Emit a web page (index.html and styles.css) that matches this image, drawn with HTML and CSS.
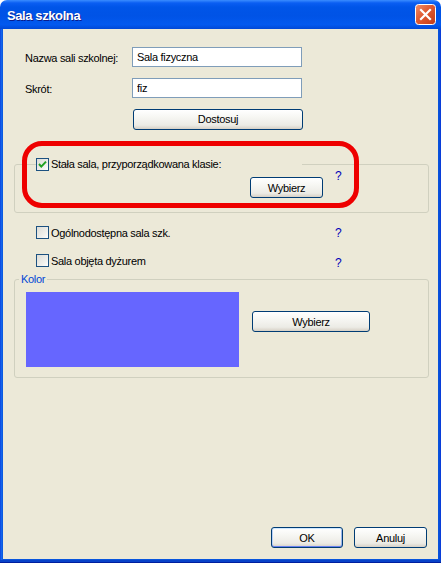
FILE: index.html
```html
<!DOCTYPE html>
<html lang="pl">
<head>
  <meta charset="UTF-8" />
  <title>Sala szkolna</title>
  <link rel="stylesheet" href="styles.css">
</head>
<body>
  <div class="window">
    <div class="titlebar">
      <span class="title">Sala szkolna</span>
      <button class="close" aria-label="Zamknij">
        <svg width="21" height="21" viewBox="0 0 21 21">
          <defs>
            <linearGradient id="closeFill" x1="0" y1="0" x2="1" y2="1">
              <stop offset="0" stop-color="#f0906c" />
              <stop offset="0.45" stop-color="#e05a32" />
              <stop offset="1" stop-color="#c23b16" />
            </linearGradient>
          </defs>
          <rect x="0.5" y="0.5" width="20" height="20" rx="3" fill="url(#closeFill)" stroke="#ffffff" />
          <path d="M6 6 L15 15 M15 6 L6 15" stroke="#ffffff" stroke-width="2.2" stroke-linecap="square" />
        </svg>
      </button>
    </div>

    <div class="frame">
      <div class="content">
        <div class="form">
          <label class="field-label" for="name">Nazwa sali szkolnej:</label>
          <input class="field" id="name" type="text" value="Sala fizyczna" />
          <label class="field-label" for="short">Skrót:</label>
          <input class="field" id="short" type="text" value="fiz" />
          <span></span>
          <button class="btn btn-adjust">Dostosuj</button>
        </div>

        <fieldset class="group group-fixed">
          <legend class="check-legend"><span class="check checked"><svg width="11" height="11" viewBox="0 0 11 11"><path d="M2 5 L4.3 7.6 L9 2.6" fill="none" stroke="#21a121" stroke-width="2" /></svg></span>Stała sala, przyporządkowana klasie:</legend>
          <div class="group-row">
            <button class="btn btn-pick">Wybierz</button>
            <span class="help">?</span>
          </div>
        </fieldset>

        <div class="option">
          <span class="check"></span>
          <span class="option-text">Ogólnodostępna sala szk.</span>
          <span class="help">?</span>
        </div>
        <div class="option">
          <span class="check"></span>
          <span class="option-text">Sala objęta dyżurem</span>
          <span class="help help-low">?</span>
        </div>

        <fieldset class="group group-color">
          <legend class="color-legend">Kolor</legend>
          <div class="color-row">
            <div class="swatch"></div>
            <button class="btn btn-color">Wybierz</button>
          </div>
        </fieldset>

        <div class="footer">
          <button class="btn btn-default">OK</button>
          <button class="btn">Anuluj</button>
        </div>
      </div>
    </div>

    <div class="highlight"></div>
  </div>
</body>
</html>
```

FILE: styles.css
```css
* {
  box-sizing: border-box;
  margin: 0;
  padding: 0;
}

body {
  background: #ffffff;
  font-family: 'Liberation Sans', Arial, sans-serif;
  font-size: 11px;
  letter-spacing: -0.3px;
  color: #000000;
}

.window {
  position: relative;
  width: 441px;
  height: 563px;
  display: flex;
  flex-direction: column;
  border-radius: 7px 7px 0 0;
  overflow: hidden;
}

.titlebar {
  height: 29px;
  display: flex;
  align-items: center;
  padding: 0 5px 0 7px;
  background: linear-gradient(#3a8cff 0, #0a5ef2 3px, #0055e8 7px, #0053e6 55%, #0259ef 85%, #0048d6 100%);
}

.title {
  color: #ffffff;
  font-weight: bold;
  font-size: 13px;
  letter-spacing: -0.4px;
  text-shadow: 1px 1px 0 #0a1c8c;
  margin-top: 1px;
}

.close {
  margin-left: auto;
  width: 21px;
  height: 21px;
  border: none;
  background: none;
  display: block;
}

.close svg {
  display: block;
}

.frame {
  flex: 1;
  display: flex;
  padding: 0 3px 4px 3px;
  background: linear-gradient(90deg, #0831d9 0, #166aee 1px, #0855dd 3px, #0855dd calc(100% - 3px), #0a4bd8 calc(100% - 1px), #0831d9 100%);
  box-shadow: inset 0 -1px 0 #001f9e, inset 0 -3px 0 #0842c8;
}

.content {
  flex: 1;
  display: flex;
  flex-direction: column;
  background: #ece9d8;
}

.form {
  display: grid;
  grid-template-columns: 107px 170px;
  grid-template-rows: 20px 20px 21px;
  row-gap: 11px;
  align-items: center;
  padding: 18px 0 0 22px;
}

.form .btn-adjust {
  margin-top: -1px;
  margin-left: 1px;
}

.field-label {
  margin-top: 1px;
}

.field {
  height: 20px;
  width: 170px;
  border: 1px solid #7f9db9;
  background: #ffffff;
  padding: 0 4px;
  font-family: inherit;
  font-size: 11px;
  letter-spacing: inherit;
  color: #000000;
  outline: none;
}

.btn {
  height: 21px;
  width: 73px;
  border: 1px solid #003c74;
  border-radius: 3px;
  background: linear-gradient(#ffffff 0, #f6f6f2 40%, #ecebe5 80%, #d6d0c5 100%);
  font-family: inherit;
  font-size: 11px;
  letter-spacing: inherit;
  color: #000000;
  text-align: center;
}

.btn-adjust {
  width: 170px;
}

.btn-default {
  box-shadow: inset 0 1px 0 #cee7ff, inset 0 -1px 0 #6982ee, inset 1px 0 0 #b9d1f8, inset -1px 0 0 #99b5ec;
}

.group {
  width: 415px;
  margin-left: 11px;
  border: 1px solid #d0d0bf;
  border-radius: 3px;
  min-width: 0;
}

.group-fixed {
  margin-top: 28px;
  padding: 6px 0 14px 0;
}

.check-legend {
  width: 266px;
  margin-left: 21px;
  height: 13px;
  line-height: 13px;
  display: flex;
  align-items: center;
  gap: 2px;
}

.check {
  width: 13px;
  height: 13px;
  flex-shrink: 0;
  border: 1px solid #1c5180;
  background: linear-gradient(135deg, #dcdcd7 0, #f2f2ee 70%, #ffffff 100%);
  display: flex;
  align-items: center;
  justify-content: center;
}

.check svg {
  display: block;
}

.group-row {
  display: flex;
  align-items: flex-start;
}

.btn-pick {
  margin-left: 235px;
}

.help {
  color: #0000b8;
  font-size: 12px;
  line-height: 14px;
}

.group-row .help {
  margin-left: 12px;
  margin-top: -8px;
}

.option {
  display: flex;
  align-items: center;
  height: 13px;
  padding-left: 33px;
  gap: 2px;
  margin-top: 13px;
}

.option + .option {
  margin-top: 15px;
}

.option-text {
  width: 282px;
}

.option .help {
  margin-top: 0;
}

.option .help-low {
  margin-top: 5px;
}

.group-color {
  margin-top: 6px;
  padding: 6px 0 10px 0;
}

.color-legend {
  margin-left: 4px;
  padding: 0 2px;
  height: 13px;
  line-height: 13px;
  color: #0046d5;
}

.color-row {
  display: flex;
  align-items: flex-start;
}

.swatch {
  width: 213px;
  height: 75px;
  margin-left: 11px;
  background: #6666ff;
}

.btn-color {
  width: 118px;
  margin-left: 13px;
  margin-top: 19px;
}

.footer {
  margin-top: auto;
  display: flex;
  justify-content: flex-end;
  gap: 11px;
  padding: 0 11px 11px 0;
}

.footer .btn-default {
  width: 72px;
}

.highlight {
  position: absolute;
  left: 22px;
  top: 141px;
  width: 337px;
  height: 67px;
  border: 5px solid #ee0000;
  border-radius: 20px;
  pointer-events: none;
}
```
